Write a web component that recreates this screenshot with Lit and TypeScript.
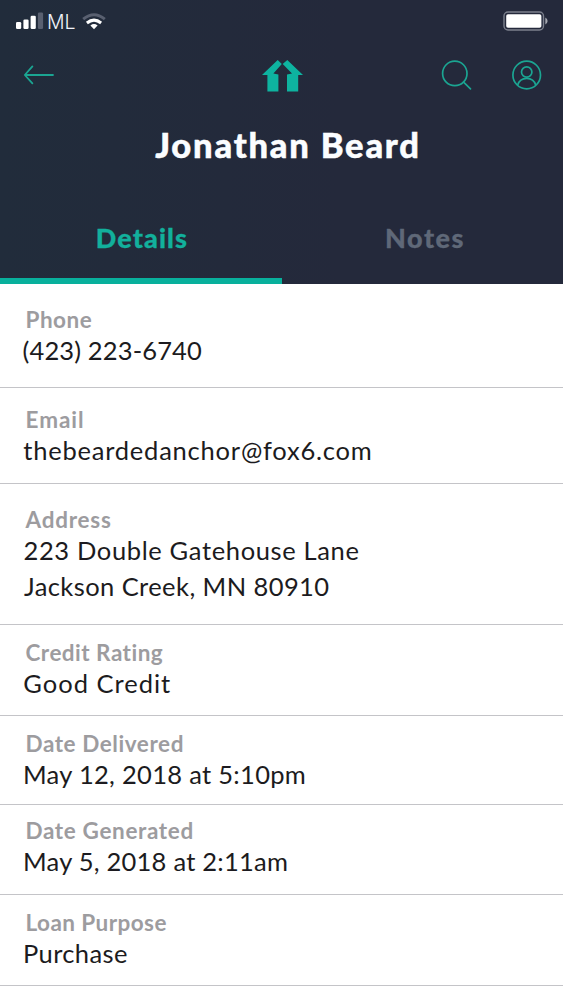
import { LitElement, html, css } from "lit";
import { customElement } from "lit/decorators.js";
import { styleMap } from "lit/directives/style-map.js";

interface Line { text: string; track: number; indent: number; }
interface Field { label: Line; values: Line[]; height: number; top: number; }

const line = (text: string, track: number, indent: number): Line => ({ text, track, indent });

const FIELDS: Field[] = [
  { label: line("Phone", 0.5, 25.5), values: [line("(423) 223-6740", 0.14, 22.5)], height: 104, top: 22 },
  { label: line("Email", 0.95, 25.5), values: [line("thebeardedanchor@fox6.com", 0.78, 23.3)], height: 96, top: 18 },
  { label: line("Address", 0.75, 25.5), values: [line("223 Double Gatehouse Lane", 0.64, 23.5), line("Jackson Creek, MN 80910", 0.42, 24)], height: 141, top: 22 },
  { label: line("Credit Rating", 0.48, 25.5), values: [line("Good Credit", 1, 23.3)], height: 91, top: 14 },
  { label: line("Date Delivered", 0.57, 25.5), values: [line("May 12, 2018 at 5:10pm", 0.3, 23)], height: 89, top: 14 },
  { label: line("Date Generated", 0.64, 25.5), values: [line("May 5, 2018 at 2:11am", 0.24, 23)], height: 90, top: 12 },
  { label: line("Loan Purpose", 0.43, 25.5), values: [line("Purchase", 0.38, 23)], height: 91, top: 14 },
];

const lineStyle = (l: Line) => styleMap({ letterSpacing: `${l.track}px`, paddingLeft: `${l.indent}px` });

@customElement("app-root")
export class AppRoot extends LitElement {
  static styles = css`
    :host { display: block; height: 1000px; overflow: hidden; background: #fff; font-family: Lato, "Open Sans", sans-serif; color: #1c1b20; }
    * { box-sizing: border-box; }
    svg { display: block; flex: none; }
    header { height: 284px; background: linear-gradient(90deg, #212c3b, #24293b 60%); display: flex; flex-direction: column; }
    .status { height: 42px; display: flex; align-items: center; padding: 0 15px 0 16px; }
    .carrier { font: 300 19.5px/24px Inter, sans-serif; color: #f0f3f9; margin: 1px 6px 0 2px; }
    .battery { margin-left: auto; }
    .nav { height: 68px; display: grid; grid-template-columns: 1fr 42px 1fr; align-items: center; padding: 0 21px 2px 23px; }
    .actions { display: flex; align-items: center; justify-content: flex-end; gap: 40px; }
    h1 { margin: 0; height: 82px; padding-left: 13px; text-align: center; font-size: 34.5px; line-height: 69px; font-weight: 900; letter-spacing: 1.8px; color: #fbfdff; -webkit-text-stroke: 0.5px #fbfdff; }
    .tabs { height: 92px; display: grid; grid-template-columns: 282px 1fr; }
    .tab { padding-top: 6px; font-size: 27px; font-weight: 900; line-height: 80px; letter-spacing: 1.1px; text-align: center; color: #5f6878; -webkit-text-stroke: 0.3px currentColor; }
    .tab.active { padding-left: 2px; color: #12b09c; border-bottom: 6px solid #08b09c; }
    .tab + .tab { letter-spacing: 1.5px; padding-left: 5px; }
    .row { border-bottom: 1px solid #c4c4c8; }
    .label { font-size: 22.5px; line-height: 28px; margin-bottom: -2px; font-weight: 700; color: #9d9c9f; white-space: pre; }
    .value { font-size: 25.5px; line-height: 36px; white-space: pre; }
  `;

  render() {
    return html`
      <header>
        <div class="status">
          <svg width="29" height="18" viewBox="0 0 29 18" fill="#fff">
            <rect x="0" y="10" width="5.2" height="7" rx="1.3"/><rect x="7.4" y="7.4" width="5.2" height="9.6" rx="1.3"/>
            <rect x="14.6" y="3.8" width="5.2" height="13.2" rx="1.3"/><rect x="21.9" y="0.4" width="5.2" height="16.6" rx="1.3" fill="#596070"/>
          </svg>
          <span class="carrier">ML</span>
          <svg width="24" height="17" viewBox="0 0 24 17" fill="none" stroke-width="3">
            <path d="M1.2 6.2Q12-2.6 22.8 6.2" stroke="#596070"/>
            <path d="M4.9 10Q12 4.2 19.1 10" stroke="#fff"/>
            <path d="M8.4 12.4Q12 9.6 15.6 12.4L12 16.2Z" fill="#fff"/>
          </svg>
          <svg class="battery" width="45" height="20" viewBox="0 0 45 20">
            <rect x="1" y="1" width="39.5" height="18" rx="4" fill="none" stroke="#7c808d" stroke-width="1.4"/>
            <rect x="3.2" y="3.2" width="35.2" height="13.6" rx="1.8" fill="#fff"/>
            <path d="M42.3 6.6Q44.6 7.8 44.6 10T42.3 13.4Z" fill="#a5a8b1"/>
          </svg>
        </div>
        <div class="nav">
          <svg width="32" height="22" viewBox="0 0 32 22" fill="none" stroke="#1ba592" stroke-width="1.8" stroke-linecap="round" stroke-linejoin="round"><path d="M30 11H2M9.4 2.4L1.8 11L9.4 19.3"/></svg>
          <svg width="42" height="34" viewBox="0 0 42 34" fill="#0eb3a0">
            <path d="M0 17L15.7 2L19.8 6L11.4 15.6L16.4 16.6V33.4H5.4V17Z"/>
            <path d="M41 17L25.3 2L20.7 6L30 15.6L25 16.6V33.4H36.2V17Z"/>
          </svg>
          <div class="actions">
            <svg width="31" height="32" viewBox="0 0 31 32" fill="none" stroke="#1ba592" stroke-width="1.7" stroke-linecap="round"><circle cx="13.8" cy="14.4" r="12.2"/><path d="M22.6 23.2L29.5 29.8"/></svg>
            <svg width="30" height="30" viewBox="0 0 30 30" fill="none" stroke="#1ba592" stroke-width="1.7"><circle cx="14.7" cy="15" r="13.8"/><circle cx="14.7" cy="12" r="5.2"/><path d="M5.6 25.2C7 20.4 10.4 18.3 14.7 18.3S22.4 20.4 23.8 25.2"/></svg>
          </div>
        </div>
        <h1>Jonathan Beard</h1>
        <div class="tabs"><div class="tab active">Details</div><div class="tab">Notes</div></div>
      </header>
      <main>
        ${FIELDS.map(f => html`
          <div class="row" style=${styleMap({ height: `${f.height}px`, paddingTop: `${f.top}px` })}>
            <div class="label" style=${lineStyle(f.label)}>${f.label.text}</div>
            ${f.values.map(v => html`<div class="value" style=${lineStyle(v)}>${v.text}</div>`)}
          </div>`)}
      </main>
    `;
  }
}
